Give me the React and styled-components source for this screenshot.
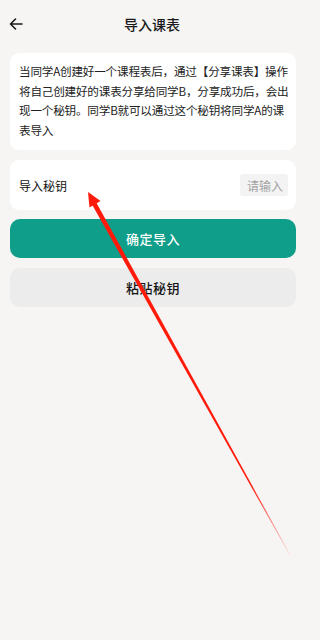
import React, { useState } from "react";
import styled, { createGlobalStyle } from "styled-components";

const GlobalStyle = createGlobalStyle`
  html, body {
    margin: 0;
    padding: 0;
    background: #f6f5f3;
  }
  body {
    font-family: "Noto Sans CJK SC", "Noto Sans", sans-serif;
    color: #1e1e1e;
  }
`;

const Page = styled.div`
  position: relative;
  width: 304px;
  min-height: 640px;
  background: #f6f5f3;
  overflow: hidden;
`;

const Header = styled.div`
  position: relative;
  height: 48px;
  display: flex;
  align-items: center;
  justify-content: center;
`;

const BackButton = styled.button`
  position: absolute;
  left: 7px;
  top: 15px;
  width: 18px;
  height: 18px;
  padding: 0;
  border: none;
  background: none;
  display: flex;
  align-items: center;
  justify-content: center;
  color: #1a1a1a;
`;

const Title = styled.h1`
  margin: 0;
  font-size: 14px;
  font-weight: 500;
  color: #1a1a1a;
`;

const Main = styled.div`
  display: flex;
  flex-direction: column;
  gap: 10px;
  padding: 5px 8px 0 10px;
`;

const Card = styled.div`
  background: #fff;
  border-radius: 9px;
`;

const Intro = styled(Card)`
  padding: 9px 6px 10px 9px;
  font-size: 11.6px;
  letter-spacing: -0.2px;
  line-height: 19.5px;
  color: #222;
`;

const Line = styled.span`
  display: block;
  white-space: nowrap;
`;

const KeyRow = styled(Card)`
  height: 50px;
  padding: 0 8px 0 9px;
  display: flex;
  align-items: center;
  justify-content: space-between;
  font-size: 12px;
  font-weight: 400;
  color: #111;
`;

const KeyInput = styled.input`
  width: 48px;
  height: 22px;
  box-sizing: border-box;
  border: none;
  border-radius: 3px;
  background: #f3f3f3;
  padding: 0 5px;
  font-family: inherit;
  font-size: 12px;
  color: #333;
  text-align: right;
  outline: none;
  &::placeholder {
    color: #a3a3a3;
  }
`;

const Action = styled.button`
  height: 39px;
  border: none;
  border-radius: 10px;
  font-family: inherit;
  font-size: 13px;
  font-weight: 500;
  letter-spacing: 0.5px;
  cursor: pointer;
  background: ${(p) => (p.$primary ? "#0e9e89" : "#ececec")};
  color: ${(p) => (p.$primary ? "#fff" : "#141414")};
  margin-top: ${(p) => (p.$primary ? "-1px" : "0")};
`;

const Overlay = styled.svg`
  position: absolute;
  left: 0;
  top: 0;
  pointer-events: none;
`;

const introLines = [
  "当同学A创建好一个课程表后，通过【分享课表】操作",
  "将自己创建好的课表分享给同学B，分享成功后，会出",
  "现一个秘钥。同学B就可以通过这个秘钥将同学A的课",
  "表导入",
];

const App = () => {
  const [secret, setSecret] = useState("");

  return (
    <Page>
      <GlobalStyle />
      <Header>
        <BackButton aria-label="返回">
          <svg width="14" height="12" viewBox="0 0 14 12" fill="none">
            <path
              d="M13 6H1.5M6.5 1L1.5 6l5 5"
              stroke="currentColor"
              strokeWidth="1.6"
              strokeLinecap="round"
              strokeLinejoin="round"
            />
          </svg>
        </BackButton>
        <Title>导入课表</Title>
      </Header>
      <Main>
        <Intro>
          {introLines.map((t) => (
            <Line key={t}>{t}</Line>
          ))}
        </Intro>
        <KeyRow>
          <span>导入秘钥</span>
          <KeyInput
            placeholder="请输入"
            value={secret}
            onChange={(e) => setSecret(e.target.value)}
          />
        </KeyRow>
        <Action $primary>确定导入</Action>
        <Action>粘贴秘钥</Action>
      </Main>

      {/* red annotation arrow drawn over the page */}
      <Overlay width="304" height="640" viewBox="0 0 304 640">
        <defs>
          <linearGradient id="fade" x1="95" y1="203" x2="290" y2="555" gradientUnits="userSpaceOnUse">
            <stop offset="0" stopColor="#ff1a0a" />
            <stop offset="0.8" stopColor="#ff1a0a" />
            <stop offset="1" stopColor="#ff1a0a" stopOpacity="0.1" />
          </linearGradient>
        </defs>
        <polygon points="96,202 92,204.5 289.8,555.2 290.3,554.8" fill="url(#fade)" />
        <polygon points="88,192 100.5,201 89.5,207.5" fill="#ff1a0a" />
      </Overlay>
    </Page>
  );
};

export default App;
